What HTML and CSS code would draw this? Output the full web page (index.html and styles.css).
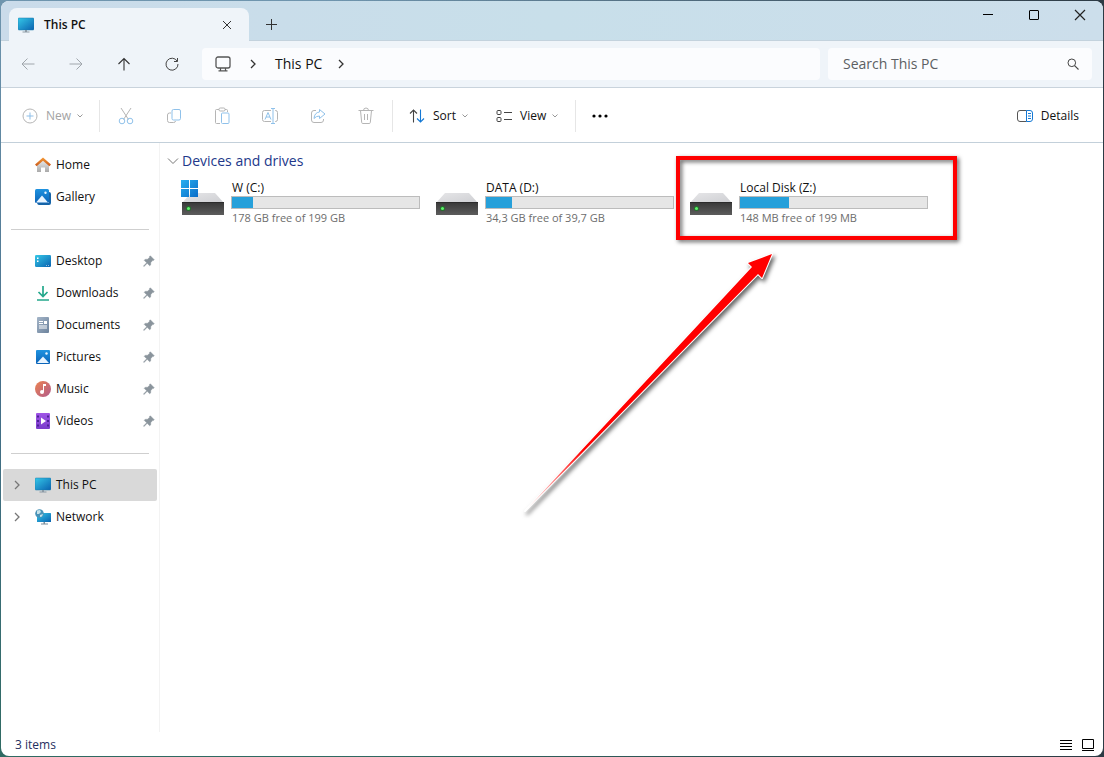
FILE: index.html
```html
<!DOCTYPE html>
<html lang="en">
<head>
<meta charset="utf-8">
<meta name="viewport" content="width=device-width, initial-scale=1">
<title>This PC</title>
<link rel="stylesheet" href="styles.css">
</head>
<body>
<svg class="defs" width="0" height="0" aria-hidden="true">
  <defs>
    <linearGradient id="screen" x1="0" y1="0" x2="1" y2="1"><stop offset="0" stop-color="#35c8e8"/><stop offset="1" stop-color="#0a62b0"/></linearGradient>
    <linearGradient id="roof" x1="0" y1="0" x2="0" y2="1"><stop offset="0" stop-color="#f59a35"/><stop offset="1" stop-color="#c9581b"/></linearGradient>
    <linearGradient id="wall" x1="0" y1="0" x2="0" y2="1"><stop offset="0" stop-color="#eeeeee"/><stop offset="1" stop-color="#a9a9a9"/></linearGradient>
    <linearGradient id="photo" x1="0" y1="0" x2="0" y2="1"><stop offset="0" stop-color="#1f93e0"/><stop offset="1" stop-color="#0b63b8"/></linearGradient>
    <linearGradient id="doc" x1="0" y1="0" x2="1" y2="1"><stop offset="0" stop-color="#a4b5c8"/><stop offset="1" stop-color="#6c829c"/></linearGradient>
    <linearGradient id="music" x1="0" y1="0" x2="1" y2="1"><stop offset="0" stop-color="#ec8350"/><stop offset="1" stop-color="#b15b8c"/></linearGradient>
    <linearGradient id="video" x1="0" y1="0" x2="0" y2="1"><stop offset="0" stop-color="#a055e6"/><stop offset="1" stop-color="#7a3ccb"/></linearGradient>
    <linearGradient id="drive-top" x1="0" y1="0" x2="1" y2="1"><stop offset="0" stop-color="#e6e6e8"/><stop offset="1" stop-color="#cdced2"/></linearGradient>
    <linearGradient id="drive-front" x1="0" y1="0" x2="0" y2="1"><stop offset="0" stop-color="#383838"/><stop offset="1" stop-color="#5c5c5c"/></linearGradient>
    <linearGradient id="win" x1="0" y1="0" x2="1" y2="1"><stop offset="0" stop-color="#28b0f0"/><stop offset="1" stop-color="#0a6cc8"/></linearGradient>
    <linearGradient id="arrow-fill" gradientUnits="userSpaceOnUse" x1="10" y1="266" x2="70" y2="206"><stop offset="0" stop-color="#ffffff"/><stop offset="1" stop-color="#ff0000"/></linearGradient>
    <symbol id="monitor" viewBox="0 0 16 16">
      <rect x="0" y="1" width="16" height="12" rx="1" fill="url(#screen)" stroke="#1a78a8" stroke-width="0.5"/>
      <path d="M7 13h2v2H7zM4.500 14.500h7v1h-7z" fill="#8b9aa5"/>
    </symbol>
    <symbol id="pin" viewBox="0 0 12 12">
      <path d="M7.300.8 11.200 4.700 10.400 5.500 9.800 5.300 7.800 7.500 7.600 10 6.700 10.800 4.200 8.300 1 11.500.5 11 3.700 7.800 1.200 5.300 2 4.400 4.600 4.200 6.700 2.200 6.500 1.600Z" fill="#8a949c" stroke="#8a949c" stroke-width="0.5"/>
    </symbol>
    <symbol id="chevron-right" viewBox="0 0 8 10"><path d="M2 1l4 4-4 4" fill="none" stroke="currentColor" stroke-width="1.300"/></symbol>
    <symbol id="chevron-down" viewBox="0 0 8 6"><path d="M1.500 1.500 4 4l2.500-2.500" fill="none" stroke="#999" stroke-width="1"/></symbol>
    <symbol id="drive" viewBox="0 0 42 24">
      <path d="M9 1h24l9 10H0z" fill="url(#drive-top)"/>
      <path d="M0 10h42v13H0z" fill="url(#drive-front)"/>
      <path d="M0 10h42v1H0z" fill="#2b2b2b"/>
      <circle cx="6.500" cy="16.500" r="2.500" fill="#23702b"/><circle cx="6.500" cy="16.500" r="1.500" fill="#5df26a"/>
    </symbol>
  </defs>
</svg>

<div class="window">
  <header class="titlebar">
    <div class="tab">
      <svg width="16" height="16"><use href="#monitor"/></svg>
      <span class="tab-title">This PC</span>
      <button class="icon-button tab-close" aria-label="Close tab"><svg width="10" height="10" viewBox="0 0 10 10"><path d="M1 1l8 8M9 1 1 9" stroke="#333" stroke-width="1"/></svg></button>
    </div>
    <button class="icon-button new-tab" aria-label="New tab"><svg width="11" height="11" viewBox="0 0 11 11"><path d="M5.500 0v11M0 5.500h11" stroke="#333"/></svg></button>
    <div class="window-buttons">
      <button class="icon-button" aria-label="Minimize"><svg width="10" height="10" viewBox="0 0 10 10"><path d="M0 4.500h10" stroke="#000"/></svg></button>
      <button class="icon-button" aria-label="Maximize"><svg width="10" height="10" viewBox="0 0 10 10"><rect x=".5" y=".5" width="9" height="9" rx=".5" fill="none" stroke="#000"/></svg></button>
      <button class="icon-button" aria-label="Close"><svg width="12" height="12" viewBox="0 0 12 12"><path d="M1 1l10 10M11 1 1 11" stroke="#222" stroke-width="1.200"/></svg></button>
    </div>
  </header>

  <nav class="navbar" aria-label="Navigation">
    <button class="icon-button nav-button" aria-label="Back" disabled><svg width="14" height="14" viewBox="0 0 14 14"><path d="M13.500 7H1M6.500 1.500 1 7l5.500 5.500" fill="none" stroke="#a0a6ac"/></svg></button>
    <button class="icon-button nav-button" aria-label="Forward" disabled><svg width="14" height="14" viewBox="0 0 14 14"><path d="M.5 7H13M7.500 1.500 13 7l-5.500 5.500" fill="none" stroke="#a0a6ac"/></svg></button>
    <button class="icon-button nav-button" aria-label="Up"><svg width="14" height="14" viewBox="0 0 14 14"><path d="M7 13.500V1.500M1.500 7 7 1.500 12.500 7" fill="none" stroke="#333" stroke-width="1.100"/></svg></button>
    <button class="icon-button nav-button" aria-label="Refresh"><svg width="14" height="14" viewBox="0 0 14 14"><path d="M12.200 4.200A6 6 0 1 0 13 7M12.500 1v3.500H9" fill="none" stroke="#444"/></svg></button>
    <div class="address">
      <svg class="address-icon" width="16" height="16" viewBox="0 0 16 16"><rect x="1" y="1" width="14" height="11" rx="2" fill="none" stroke="#555" stroke-width="1.300"/><path d="M5.500 12v2.500M10.500 12v2.500M3.500 14.800h9" stroke="#555" stroke-width="1.200"/></svg>
      <svg class="crumb-arrow" width="8" height="10"><use href="#chevron-right"/></svg>
      <a class="crumb" href="#">This PC</a>
      <svg class="crumb-arrow" width="8" height="10"><use href="#chevron-right"/></svg>
    </div>
    <label class="search">
      <input type="search" placeholder="Search This PC" aria-label="Search This PC">
      <svg width="12" height="12" viewBox="0 0 12 12"><circle cx="4.800" cy="4.800" r="3.800" fill="none" stroke="#444"/><path d="M7.600 7.600 11.500 11.500" stroke="#444" stroke-width="1.100"/></svg>
    </label>
  </nav>

  <div class="toolbar" role="toolbar" aria-label="Commands">
    <button class="command command-new" disabled>
      <svg width="16" height="16" viewBox="0 0 16 16"><circle cx="8" cy="8" r="7" fill="none" stroke="#b5b5b5"/><path d="M8 4.500v7M4.500 8h7" stroke="#8fbfe8"/></svg>
      New <svg width="8" height="6"><use href="#chevron-down"/></svg>
    </button>
    <span class="divider"></span>
    <div class="tools">
      <button class="icon-button tool" aria-label="Cut" disabled><svg width="16" height="18" viewBox="0 0 16 18"><path d="M3 1l7.500 11.500M13 1 5.500 12.500" fill="none" stroke="#b5b5b5"/><circle cx="4" cy="14" r="2.800" fill="none" stroke="#8fc1ea"/><circle cx="12" cy="14" r="2.800" fill="none" stroke="#8fc1ea"/></svg></button>
      <button class="icon-button tool" aria-label="Copy" disabled><svg width="16" height="16" viewBox="0 0 16 16"><path d="M5 5H3.500Q1.500 5 1.500 7v5.500q0 2 2 2h4q2 0 2-1.500" fill="none" stroke="#b5b5b5"/><rect x="6" y="1.500" width="8.500" height="10.500" rx="1.500" fill="none" stroke="#8fc1ea"/></svg></button>
      <button class="icon-button tool" aria-label="Paste" disabled><svg width="16" height="18" viewBox="0 0 16 18"><path d="M5 2.500H2.500q-1 0-1 1v12q0 1 1 1H6M11 2.500h1.500q1 0 1 1v1.500" fill="none" stroke="#b5b5b5"/><rect x="5" y="1" width="6" height="3" rx="1.200" fill="none" stroke="#b5b5b5"/><rect x="7.500" y="6" width="7.500" height="10.500" rx="1" fill="none" stroke="#8fc1ea"/></svg></button>
      <button class="icon-button tool" aria-label="Rename" disabled><svg width="18" height="16" viewBox="0 0 18 16"><path d="M10 2.500H3.500q-2 0-2 2v7q0 2 2 2H10M14 2.500h.5q2 0 2 2v7q0 2-2 2H14" fill="none" stroke="#b5b5b5"/><path d="M12 .5v15M10 .5h4M10 15.500h4M4 11.500l3-7 3 7M5 9h4" fill="none" stroke="#8fc1ea"/></svg></button>
      <button class="icon-button tool" aria-label="Share" disabled><svg width="16" height="16" viewBox="0 0 16 16"><path d="M6 2.500H4q-2.500 0-2.500 2.500v7q0 2.500 2.500 2.500h7q2.500 0 2.500-2.500v-1" fill="none" stroke="#b5b5b5"/><path d="M9.500 1.500 15 6l-5.500 4.500V8Q6 8 4 10.500 4.500 4.500 9.500 4z" fill="none" stroke="#8fc1ea" stroke-linejoin="round"/></svg></button>
      <button class="icon-button tool" aria-label="Delete" disabled><svg width="16" height="18" viewBox="0 0 16 18"><path d="M.5 3.500h15M5.500 3.500q0-2.500 2.500-2.500t2.500 2.500M2.500 3.500l1.200 12q.1 1 1.100 1h6.400q1 0 1.100-1l1.200-12M6.500 7v6M9.500 7v6" fill="none" stroke="#b5b5b5"/></svg></button>
    </div>
    <span class="divider"></span>
    <button class="command command-sort">
      <svg width="16" height="14" viewBox="0 0 16 14"><path d="M4.500 13.500V1M1 4.500 4.500 1 8 4.500" fill="none" stroke="#444" stroke-width="1.100"/><path d="M11.500.5V13M8 9.500l3.500 3.500L15 9.500" fill="none" stroke="#1478d4" stroke-width="1.100"/></svg>
      Sort <svg width="8" height="6"><use href="#chevron-down"/></svg>
    </button>
    <button class="command command-view">
      <svg width="16" height="14" viewBox="0 0 16 14"><rect x="1" y="1.500" width="4" height="4" rx="1" fill="none" stroke="#444"/><rect x="1" y="8.500" width="4" height="4" rx="1" fill="none" stroke="#444"/><path d="M8 3.500h8M8 10.500h8" stroke="#444"/></svg>
      View <svg width="8" height="6"><use href="#chevron-down"/></svg>
    </button>
    <span class="divider"></span>
    <button class="icon-button tool" aria-label="More"><svg width="18" height="4" viewBox="0 0 18 4"><circle cx="3" cy="2" r="1.600"/><circle cx="9" cy="2" r="1.600"/><circle cx="15" cy="2" r="1.600"/></svg></button>
    <button class="command command-details">
      <svg width="16" height="12" viewBox="0 0 16 12"><path d="M9.500.5H3Q.5.5.5 3v6q0 2.500 2.500 2.500h6.500" fill="none" stroke="#555"/><path d="M9.500.5H13q2.500 0 2.500 2.500v6q0 2.500-2.500 2.500H9.500zM11 3.500h3M11 6h3M11 8.500h3" fill="none" stroke="#1478d4"/></svg>
      Details
    </button>
  </div>

  <div class="body">
    <nav class="sidebar" aria-label="Folders">
      <ul>
        <li><a href="#"><svg class="place" width="16" height="16" viewBox="0 0 16 16"><path d="M2 7.500 8 2.500l6 5V15h-4v-4.500H6V15H2z" fill="url(#wall)"/><path d="M8 .5 0 7.600l1.600 1.700L8 3.800l6.400 5.500L16 7.600z" fill="url(#roof)"/></svg><span>Home</span></a></li>
        <li><a href="#"><svg class="place" width="16" height="16" viewBox="0 0 16 16"><path d="M14 3q2 0 2 2v9q0 2-2 2H4q-1.500 0-2-2h12z" fill="#1664a8"/><rect width="14" height="14" rx="1.500" fill="url(#photo)"/><path d="M1 13.500 7 6.500l6 7z" fill="#e9f5ff"/><circle cx="10.500" cy="3.800" r="1.200" fill="#e9f5ff"/></svg><span>Gallery</span></a></li>
      </ul>
      <hr>
      <ul>
        <li><a href="#"><svg class="place" width="16" height="16" viewBox="0 0 16 16"><rect y="2" width="16" height="12" rx="1.200" fill="url(#screen)"/><path d="M2 4.500h1.500V6H2zM2 7.500h1.500V9H2z" fill="#fff"/><path d="M11 12h1v1h-1zM13 12h1v1h-1z" fill="#9bd"/></svg><span>Desktop</span><svg class="pin" width="12" height="12"><use href="#pin"/></svg></a></li>
        <li><a href="#"><svg class="place" width="16" height="16" viewBox="0 0 16 16"><path d="M8 1v10M3.500 7 8 11.500 12.500 7M2 15h12" fill="none" stroke="#24a88c" stroke-width="1.700"/></svg><span>Downloads</span><svg class="pin" width="12" height="12"><use href="#pin"/></svg></a></li>
        <li><a href="#"><svg class="place" width="16" height="16" viewBox="0 0 16 16"><rect x="2" y="0" width="12" height="16" rx="1" fill="url(#doc)"/><path d="M4 4.500h4M4 6.500h4M4 9h8M4 11h8" stroke="#fff"/><path d="M9 4h3v3H9z" fill="#fff"/></svg><span>Documents</span><svg class="pin" width="12" height="12"><use href="#pin"/></svg></a></li>
        <li><a href="#"><svg class="place" width="16" height="16" viewBox="0 0 16 16"><rect x="1" y="1" width="14" height="14" rx="1" fill="url(#photo)"/><path d="M2 14 8 7.500l6 6.500z" fill="#e9f5ff"/><circle cx="11.500" cy="4.500" r="1.200" fill="#e9f5ff"/></svg><span>Pictures</span><svg class="pin" width="12" height="12"><use href="#pin"/></svg></a></li>
        <li><a href="#"><svg class="place" width="16" height="16" viewBox="0 0 16 16"><circle cx="8" cy="8" r="8" fill="url(#music)"/><path d="M8 3h3v2H9v6H8z" fill="#fff"/><circle cx="7" cy="11" r="2" fill="#fff"/></svg><span>Music</span><svg class="pin" width="12" height="12"><use href="#pin"/></svg></a></li>
        <li><a href="#"><svg class="place" width="16" height="16" viewBox="0 0 16 16"><rect x="1" width="14" height="16" rx="1" fill="url(#video)"/><path d="M2 2.500h2v2H2zM2 7h2v2H2zM2 11.500h2v2H2zM12 2.500h2v2h-2zM12 7h2v2h-2zM12 11.500h2v2h-2z" fill="#4c2196"/><path d="M6 4.500 11 8l-5 3.500z" fill="#fff"/></svg><span>Videos</span><svg class="pin" width="12" height="12"><use href="#pin"/></svg></a></li>
      </ul>
      <hr>
      <ul>
        <li><a class="expandable selected" href="#" aria-current="page"><svg class="expand" width="8" height="10"><use href="#chevron-right"/></svg><svg width="16" height="16"><use href="#monitor"/></svg><span>This PC</span></a></li>
        <li><a class="expandable" href="#"><svg class="expand" width="8" height="10"><use href="#chevron-right"/></svg><svg width="16" height="16" viewBox="0 0 16 16"><rect x="2" y="4" width="14" height="9" rx=".5" fill="url(#screen)"/><path d="M8.500 13h1.500v1.500H8.500zM6 14.500h7v1H6z" fill="#7b8e9c"/><circle cx="4.500" cy="4.500" r="4.300" fill="#4a93b8"/><path d="M2 1.500 5 1 6 3 4 5 2 5zM5 6l3-1-1 2.500-2 .5z" fill="#c8e3ea"/></svg><span>Network</span></a></li>
      </ul>
    </nav>

    <main class="content">
      <h1><svg width="12" height="8" viewBox="0 0 12 8"><path d="M1 1.500 6 6.500l5-5" fill="none" stroke="#777"/></svg>Devices and drives</h1>
      <ul class="drives">
        <li class="drive">
          <svg class="drive-icon" width="44" height="35" viewBox="0 0 44 35"><use href="#drive" x="1" y="12" width="42" height="24"/><path d="M0 0h8v8H0zM9 0h8v8H9zM0 9h8v8H0zM9 9h8v8H9z" fill="url(#win)"/></svg>
          <div class="drive-info"><span class="drive-name">W (C:)</span><div class="meter"><div class="meter-fill" style="width:11%"></div></div><span class="drive-space">178 GB free of 199 GB</span></div>
        </li>
        <li class="drive">
          <svg class="drive-icon" width="44" height="35" viewBox="0 0 44 35"><use href="#drive" x="1" y="12" width="42" height="24"/></svg>
          <div class="drive-info"><span class="drive-name">DATA (D:)</span><div class="meter"><div class="meter-fill" style="width:14%"></div></div><span class="drive-space">34,3 GB free of 39,7 GB</span></div>
        </li>
        <li class="drive">
          <svg class="drive-icon" width="44" height="35" viewBox="0 0 44 35"><use href="#drive" x="1" y="12" width="42" height="24"/></svg>
          <div class="drive-info"><span class="drive-name">Local Disk (Z:)</span><div class="meter"><div class="meter-fill" style="width:26%"></div></div><span class="drive-space">148 MB free of 199 MB</span></div>
          <div class="callout"></div>
          <svg class="arrow" width="270" height="280" viewBox="0 0 270 280" aria-hidden="true">
            <path d="M10 265 237 21 233 17 257 8 247 32 243 28Z" fill="url(#arrow-fill)" stroke="#fff" stroke-width="2" stroke-linejoin="round" paint-order="stroke"/>
          </svg>
        </li>
      </ul>
    </main>
  </div>

  <footer class="statusbar">
    <span>3 items</span>
    <div class="view-modes">
      <button class="icon-button" aria-label="Details view"><svg width="12" height="12" viewBox="0 0 12 12"><path d="M0 1.500h12M0 4.500h12M0 7.500h12M0 10.500h12" stroke="#000"/></svg></button>
      <button class="icon-button" aria-label="Large icons view"><svg width="12" height="12" viewBox="0 0 12 12"><path d="M.5.5h11v9H.5zM0 11.500h12" fill="none" stroke="#000"/></svg></button>
    </div>
  </footer>
</div>
</body>
</html>
```
FILE: styles.css
```css
* { box-sizing: border-box; }

body {
  margin: 0;
  height: 100vh;
  padding: 1px;
  background: linear-gradient(90deg, rgba(30, 45, 55, 0) 30%, #2c3a44), linear-gradient(#6f95ae, #46708c 50%, #2f6a62);
  font: 12px/16px "Open Sans", "Noto Sans", sans-serif;
  color: #111;
}

svg { display: block; flex: none; }
.defs { position: absolute; }
ul { margin: 0; padding: 0; list-style: none; }
a { color: inherit; text-decoration: none; }

button {
  font: inherit;
  color: inherit;
  background: none;
  border: 0;
  padding: 0;
}

.icon-button {
  display: flex;
  align-items: center;
  justify-content: center;
}

.window {
  height: 100%;
  display: flex;
  flex-direction: column;
  background: #fff;
  border-radius: 8px;
  overflow: hidden;
}

.titlebar {
  display: flex;
  height: 40px;
  padding-left: 8px;
  background: linear-gradient(90deg, #cadbea, #c8dfea 50%, #ccdeeb);
  border-bottom: 1px solid #c3d2dd;
}

.tab {
  display: flex;
  align-items: center;
  width: 240px;
  height: 33px;
  margin-top: 7px;
  padding: 0 9px;
  gap: 10px;
  background: #eff4f9;
  border-radius: 8px 8px 0 0;
}

.tab-title { flex: 1; font-weight: 600; }
.tab-close { width: 26px; height: 24px; }
.new-tab { width: 44px; margin-top: 7px; }

.window-buttons { display: flex; margin-left: auto; }
.window-buttons .icon-button { width: 46px; height: 28px; }

.navbar {
  display: flex;
  align-items: center;
  height: 47px;
  padding: 0 11px 0 3px;
  background: #eff4f9;
  border-bottom: 1px solid #c9d3dc;
  font-size: 14px;
  line-height: 20px;
}

.nav-button { width: 48px; height: 32px; }

.address {
  flex: 1;
  display: flex;
  align-items: center;
  height: 32px;
  margin: 0 8px 0 6px;
  padding-left: 13px;
  background: #fbfcfe;
  border-radius: 4px;
}

.crumb { padding: 0 15px 0 18px; }
.address-icon { margin-right: 18px; }
.crumb-arrow { color: #333; }

.search {
  display: flex;
  align-items: center;
  width: 264px;
  height: 32px;
  padding: 0 13px 0 15px;
  background: #fbfcfe;
  border-radius: 4px;
}

.search input {
  flex: 1;
  min-width: 0;
  padding: 0;
  border: 0;
  outline: 0;
  background: none;
  font: inherit;
}

.search input::placeholder { color: #5c5f63; opacity: 1; }

.toolbar {
  display: flex;
  align-items: center;
  height: 55px;
  padding: 1px 24px 0 21px;
  border-bottom: 1px solid #c3d0da;
}

.command {
  display: flex;
  align-items: center;
  gap: 8px;
  height: 32px;
}

.command svg:last-child:not(:first-child) { margin-left: -3px; }
.command-new { width: 77px; color: #a3a3a3; }
.command-sort { width: 87px; padding-left: 16px; }
.command-view { width: 95px; padding-left: 16px; }
.command-details { margin-left: auto; }
.divider { width: 1px; height: 32px; background: #e6e6e6; }
.tools { display: flex; padding: 0 2px; }
.tool { width: 48px; height: 32px; }

.body { flex: 1; min-height: 0; display: flex; }

.sidebar {
  width: 159px;
  padding: 6px 2px 0;
  border-right: 1px solid #f3f3f3;
}

.sidebar a {
  display: flex;
  align-items: center;
  gap: 5px;
  height: 32px;
  padding: 0 2px 0 10px;
  border-radius: 2px;
}

.place { margin-left: 22px; }
.pin { margin-left: auto; }
.expand { margin-right: 9px; color: #777; }
.selected { background: #d9d9d9; }

.sidebar hr {
  height: 1px;
  margin: 16px 8px 15px;
  border: 0;
  background: #cfcfcf;
}

.content { flex: 1; min-width: 0; padding: 8px 7px; }

h1 {
  display: flex;
  align-items: center;
  gap: 3px;
  margin: 0;
  font-size: 14px;
  line-height: 20px;
  font-weight: 400;
  color: #22388a;
}

.drives {
  display: flex;
  gap: 14px;
  padding: 8px 0 0 14px;
}

.drive {
  position: relative;
  display: flex;
  align-items: flex-start;
  gap: 6px;
  width: 239px;
  margin-right: 1px;
}

.drive-icon { margin-top: 1px; }
.drive-info { flex: 1; }
.drive-name, .drive-space { display: block; padding-left: 1px; }
.drive-name { line-height: 17px; }
.drive-space { color: #6d6d6d; line-height: 18px; font-size: 11px; }

.meter {
  height: 13px;
  border: 1px solid #bcbcbc;
  background: #e6e6e6;
}

.meter-fill { height: 100%; background: #26a0da; }

/* Annotation over the drive list */
.callout {
  position: absolute;
  left: -13px;
  top: -23px;
  width: 281px;
  height: 84px;
  border: 4px solid #fe0000;
  filter: drop-shadow(2px 2px 2px rgba(0, 0, 0, 0.6));
}

.arrow {
  position: absolute;
  left: -174px;
  top: 67px;
  filter: drop-shadow(2px 3px 2px rgba(0, 0, 0, 0.6));
  pointer-events: none;
}

.statusbar {
  display: flex;
  align-items: center;
  justify-content: space-between;
  height: 24px;
  padding: 1px 9px 0 14px;
  color: #1f2f60;
}

.view-modes { display: flex; gap: 10px; }
```
